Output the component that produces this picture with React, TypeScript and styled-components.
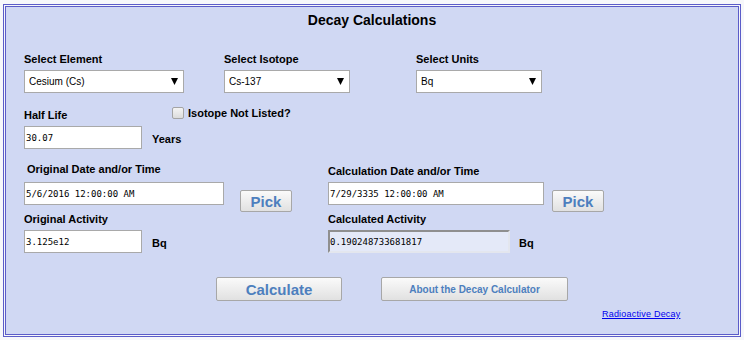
import React, { useState } from "react";
import styled, { createGlobalStyle } from "styled-components";

const GlobalStyle = createGlobalStyle`
  html, body {
    margin: 0;
    padding: 0;
    background: #f6f7fa;
  }
  body {
    font-family: "Liberation Sans", Arial, sans-serif;
    color: #000;
  }
`;

const Page = styled.main`
  width: 744px;
  height: 340px;
  padding: 4px 3px 3px 3px;
  box-sizing: border-box;
`;

const Panel = styled.section`
  width: 738px;
  height: 333px;
  box-sizing: border-box;
  border: 3px double #5b5cc9;
  background: #d0d8f3;
  background-clip: padding-box;
  padding: 5px 0 0 18px;
  display: flex;
  flex-direction: column;
`;

const Title = styled.h1`
  margin: 0 0 0 -18px;
  font-size: 14px;
  line-height: 16px;
  font-weight: bold;
  text-align: center;
`;

const Row = styled.div<{ $top: number }>`
  display: flex;
  align-items: flex-start;
  margin-top: ${(p) => p.$top}px;
`;

const Field = styled.div<{ $width?: number }>`
  display: flex;
  flex-direction: column;
  width: ${(p) => (p.$width ? `${p.$width}px` : "auto")};
  flex: none;
`;

const Label = styled.label<{ $indent?: number; $drop?: number; $width?: number; $flat?: boolean }>`
  font-size: 11px;
  line-height: 14px;
  font-weight: bold;
  padding-left: ${(p) => p.$indent || 0}px;
  padding-top: ${(p) => p.$drop || 0}px;
  margin-bottom: ${(p) => (p.$flat ? 0 : 4)}px;
  width: ${(p) => (p.$width ? `${p.$width}px` : "auto")};
  white-space: nowrap;
`;

const LabelLine = styled.div`
  display: flex;
  align-items: flex-start;
  margin-bottom: 4px;
  height: 14px;
`;

const SelectWrap = styled.div<{ $width: number }>`
  position: relative;
  width: ${(p) => p.$width}px;
  height: 23px;
`;

const Select = styled.select`
  appearance: none;
  width: 100%;
  height: 100%;
  box-sizing: border-box;
  border: 1px solid #a9a9a9;
  border-radius: 0;
  background: #fff;
  padding: 0 0 0 4px;
  font-family: "Liberation Sans", Arial, sans-serif;
  font-size: 10px;
  color: #000;
  outline: none;
`;

const Arrow = styled.svg`
  position: absolute;
  right: 6px;
  top: 8px;
  pointer-events: none;
`;

const Input = styled.input<{ $width: number; $sunken?: boolean }>`
  width: ${(p) => p.$width}px;
  height: 23px;
  box-sizing: border-box;
  margin: 0;
  padding: 0 0 0 ${(p) => (p.$sunken ? 0 : 1)}px;
  border-style: solid;
  border-width: ${(p) => (p.$sunken ? 2 : 1)}px;
  border-color: ${(p) => (p.$sunken ? "#8f8f8f #e3e6ee #e3e6ee #8f8f8f" : "#a9a9a9")};
  background: ${(p) => (p.$sunken ? "#e4e9f8" : "#fff")};
  font-family: "DejaVu Sans Mono", "Liberation Mono", monospace;
  font-size: 9px;
  color: #000;
  outline: none;
`;

const Unit = styled.span<{ $gap: number }>`
  font-size: 11px;
  font-weight: bold;
  line-height: 14px;
  margin-left: ${(p) => p.$gap}px;
  padding-top: 6px;
`;

const CheckGroup = styled.div`
  display: flex;
  align-items: center;
  margin-top: -2px;
`;

const Check = styled.input`
  appearance: none;
  width: 12px;
  height: 12px;
  margin: 0 4px 0 0;
  border: 1px solid #a4a4a4;
  border-radius: 2px;
  background: linear-gradient(#f4f4f4, #dcdcdc);
`;

const Button = styled.button<{ $width: number; $height: number; $size: number }>`
  width: ${(p) => p.$width}px;
  height: ${(p) => p.$height}px;
  box-sizing: border-box;
  margin: 0;
  padding: 0;
  border: 1px solid #a7a7a7;
  border-radius: 2px;
  background: linear-gradient(#fafafa, #e1e1e1);
  font-family: "Liberation Sans", Arial, sans-serif;
  font-weight: bold;
  font-size: ${(p) => p.$size}px;
  color: #4d7fbe;
  cursor: pointer;
  flex: none;
`;

const PickButton = styled(Button)<{ $gap: number }>`
  margin-left: ${(p) => p.$gap}px;
  margin-top: 8px;
`;

const ButtonRow = styled.div`
  display: flex;
  margin: 24px 0 0 192px;
  gap: 39px;
`;

const LinkRow = styled.div`
  margin: 5px 0 0 578px;
  line-height: 12px;
`;

const Link = styled.a`
  font-size: 9px;
  color: #0000ee;
  text-decoration: underline;
  letter-spacing: 0.2px;
`;

const DropArrow = () => (
  <Arrow width="7" height="7" viewBox="0 0 7 7">
    <polygon points="0,0 7,0 3.5,7" fill="#000" />
  </Arrow>
);

const App = () => {
  const [element, setElement] = useState("Cesium (Cs)");
  const [isotope, setIsotope] = useState("Cs-137");
  const [units, setUnits] = useState("Bq");

  return (
    <Page>
      <GlobalStyle />
      <Panel>
        <Title>Decay Calculations</Title>

        <Row $top={24}>
          <Field $width={200}>
            <Label>Select Element</Label>
            <SelectWrap $width={160}>
              <Select value={element} onChange={(e) => setElement(e.target.value)}>
                <option>Cesium (Cs)</option>
              </Select>
              <DropArrow />
            </SelectWrap>
          </Field>
          <Field $width={192}>
            <Label>Select Isotope</Label>
            <SelectWrap $width={126}>
              <Select value={isotope} onChange={(e) => setIsotope(e.target.value)}>
                <option>Cs-137</option>
              </Select>
              <DropArrow />
            </SelectWrap>
          </Field>
          <Field>
            <Label>Select Units</Label>
            <SelectWrap $width={126}>
              <Select value={units} onChange={(e) => setUnits(e.target.value)}>
                <option>Bq</option>
              </Select>
              <DropArrow />
            </SelectWrap>
          </Field>
        </Row>

        <Row $top={15}>
          <Field>
            <LabelLine>
              <Label $width={148} $flat>Half Life</Label>
              <CheckGroup>
                <Check type="checkbox" />
                <Label as="span" $flat>Isotope Not Listed?</Label>
              </CheckGroup>
            </LabelLine>
            <Row $top={0}>
              <Input $width={118} defaultValue="30.07" />
              <Unit $gap={10}>Years</Unit>
            </Row>
          </Field>
        </Row>

        <Row $top={13}>
          <Field $width={304}>
            <Label $indent={3}>Original Date and/or Time</Label>
            <Row $top={2}>
              <Input $width={200} defaultValue="5/6/2016 12:00:00 AM" />
              <PickButton $gap={16} $width={52} $height={22} $size={15}>Pick</PickButton>
            </Row>
          </Field>
          <Field>
            <Label $drop={2}>Calculation Date and/or Time</Label>
            <Row $top={0}>
              <Input $width={216} defaultValue="7/29/3335 12:00:00 AM" />
              <PickButton $gap={8} $width={52} $height={22} $size={15}>Pick</PickButton>
            </Row>
          </Field>
        </Row>

        <Row $top={0}>
          <Field $width={304}>
            <Label>Original Activity</Label>
            <Row $top={0}>
              <Input $width={118} defaultValue="3.125e12" />
              <Unit $gap={10}>Bq</Unit>
            </Row>
          </Field>
          <Field>
            <Label>Calculated Activity</Label>
            <Row $top={0}>
              <Input $width={182} $sunken readOnly value="0.190248733681817" />
              <Unit $gap={9}>Bq</Unit>
            </Row>
          </Field>
        </Row>

        <ButtonRow>
          <Button $width={126} $height={24} $size={15}>Calculate</Button>
          <Button $width={187} $height={24} $size={10}>About the Decay Calculator</Button>
        </ButtonRow>

        <LinkRow>
          <Link href="#">Radioactive Decay</Link>
        </LinkRow>
      </Panel>
    </Page>
  );
};

export default App;
